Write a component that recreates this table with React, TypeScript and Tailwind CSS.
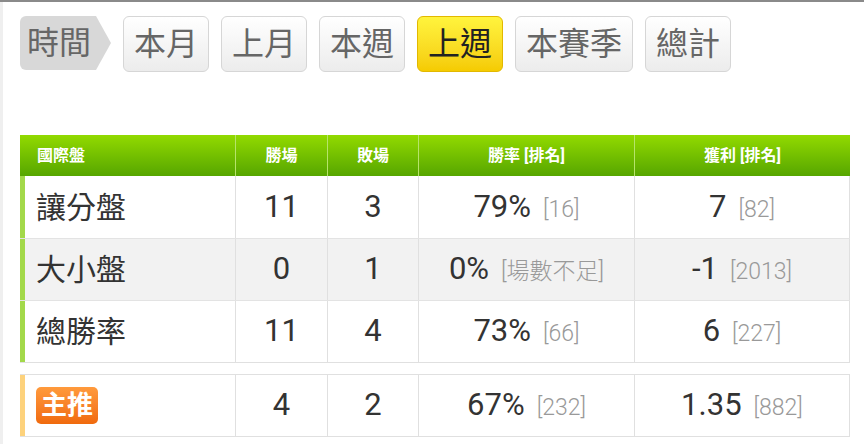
const tabs = ['本月', '上月', '本週', '上週', '本賽季', '總計'];
const active = '上週';

type Row = { name: string; win: string; lose: string; rate: string; rateRank: string; profit: string; profitRank: string };

const rows: Row[] = [
  { name: '讓分盤', win: '11', lose: '3', rate: '79%', rateRank: '[16]', profit: '7', profitRank: '[82]' },
  { name: '大小盤', win: '0', lose: '1', rate: '0%', rateRank: '[場數不足]', profit: '-1', profitRank: '[2013]' },
  { name: '總勝率', win: '11', lose: '4', rate: '73%', rateRank: '[66]', profit: '6', profitRank: '[227]' },
];

const cols = 'grid grid-cols-[215px_92px_91px_216px_216px]';
const font = { fontFamily: 'Roboto, "Noto Sans CJK TC", sans-serif' };

function Val({ v, rank }: { v: string; rank: string }) {
  return (
    <span className="flex items-baseline gap-[12px]">
      <span className="text-[31px] text-[#333]">{v}</span>
      <span className="text-[23px] font-light text-[#999]">{rank}</span>
    </span>
  );
}

function DataRow({ r, bg, first }: { r: Row; bg: string; first?: boolean }) {
  const cell = 'flex items-center justify-center border-l border-[#e0e0e0] text-[31px] text-[#333]';
  return (
    <div className={`${cols} h-[62px] ${bg} ${first ? '' : 'border-t border-[#e3e3e3]'}`}>
      <div className="flex items-center border-l-[5px] border-[#a3d94a] pl-[11px] text-[30px] text-[#333]">{r.name}</div>
      <div className={cell}>{r.win}</div>
      <div className={cell}>{r.lose}</div>
      <div className={cell}><Val v={r.rate} rank={r.rateRank} /></div>
      <div className={`${cell} border-r`}><Val v={r.profit} rank={r.profitRank} /></div>
    </div>
  );
}

export default function App() {
  return (
    <div className="h-[444px] w-[864px] overflow-hidden border-t-2 border-[#8a8a8a] bg-white" style={font}>
      <div className="h-full border-l-[3px] border-[#efefef] pl-[17px]">
        {/* period tabs */}
        <div className="flex items-start gap-[12px] pt-[14px]">
          <div className="relative flex h-[54px] items-center">
            <div className="flex h-full items-center rounded-l-[6px] bg-[#d8d8d8] pl-[7px] pr-[5px] text-[32px] text-[#666]">時間</div>
            <div className="h-0 w-0 border-y-[27px] border-l-[15px] border-y-transparent border-l-[#d8d8d8]" />
          </div>
          {tabs.map((t) => (
            <div
              key={t}
              className={
                t === active
                  ? 'flex h-[56px] items-center rounded-[6px] border border-[#e2b800] bg-gradient-to-b from-[#fff43c] to-[#f5cb00] px-[10px] text-[32px] text-[#222]'
                  : 'flex h-[56px] items-center rounded-[6px] border border-[#d6d6d6] bg-gradient-to-b from-[#ffffff] to-[#ececec] px-[10px] text-[32px] text-[#666]'
              }
            >
              {t}
            </div>
          ))}
        </div>

        {/* stats table */}
        <div className="mt-[63px] w-[830px]">
          <div className={`${cols} h-[41px] bg-gradient-to-b from-[#92da00] to-[#56a600] text-[16px] font-bold text-white`}>
            <div className="flex items-center pl-[17px]">國際盤</div>
            <div className="flex items-center justify-center border-l border-[#b6e46a]">勝場</div>
            <div className="flex items-center justify-center border-l border-[#b6e46a]">敗場</div>
            <div className="flex items-center justify-center border-l border-[#b6e46a]">勝率 [排名]</div>
            <div className="flex items-center justify-center border-l border-[#b6e46a]">獲利 [排名]</div>
          </div>
          <DataRow r={rows[0]} bg="bg-white" first />
          <DataRow r={rows[1]} bg="bg-[#f2f2f2]" />
          <div className="border-b border-[#e0e0e0]">
            <DataRow r={rows[2]} bg="bg-white" />
          </div>

          <div className={`${cols} mt-[11px] h-[63px] border-y border-[#e0e0e0]`}>
            <div className="flex items-center border-l-[5px] border-[#fdd27c] pl-[11px]">
              <span className="rounded-[5px] bg-gradient-to-b from-[#ff9a3c] to-[#f06a0c] px-[5px] py-[1px] text-[26px] font-bold leading-[35px] text-white">主推</span>
            </div>
            <div className="flex items-center justify-center border-l border-[#e0e0e0] text-[31px] text-[#333]">4</div>
            <div className="flex items-center justify-center border-l border-[#e0e0e0] text-[31px] text-[#333]">2</div>
            <div className="flex items-center justify-center border-l border-[#e0e0e0]"><Val v="67%" rank="[232]" /></div>
            <div className="flex items-center justify-center border-x border-[#e0e0e0]"><Val v="1.35" rank="[882]" /></div>
          </div>
        </div>
      </div>
    </div>
  );
}
